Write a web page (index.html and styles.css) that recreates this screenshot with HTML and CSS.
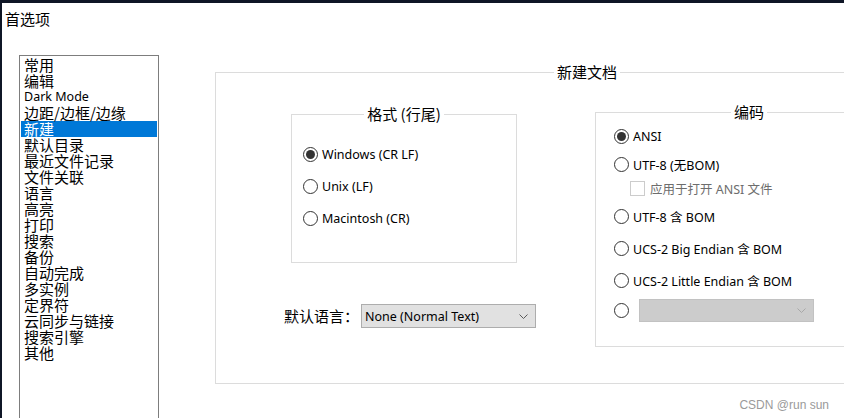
FILE: index.html
```html
<!DOCTYPE html>
<html lang="zh">
<head>
<meta charset="utf-8">
<title>首选项</title>
<link rel="stylesheet" href="styles.css">
</head>
<body>
<div class="window">
  <div class="title">首选项</div>
  <div class="main">
    <ul class="cat-list">
      <li>常用</li>
      <li>编辑</li>
      <li class="latin">Dark Mode</li>
      <li>边距/边框/边缘</li>
      <li class="selected">新建</li>
      <li>默认目录</li>
      <li>最近文件记录</li>
      <li>文件关联</li>
      <li>语言</li>
      <li>高亮</li>
      <li>打印</li>
      <li>搜索</li>
      <li>备份</li>
      <li>自动完成</li>
      <li>多实例</li>
      <li>定界符</li>
      <li>云同步与链接</li>
      <li>搜索引擎</li>
      <li>其他</li>
    </ul>
    <fieldset class="group outer">
      <legend>新建文档</legend>
      <div class="outer-body">
        <div class="left-col">
          <fieldset class="group format">
            <legend>格式 (行尾)</legend>
            <div class="format-list">
              <div class="opt"><span class="radio checked"></span>Windows (CR LF)</div>
              <div class="opt"><span class="radio"></span>Unix (LF)</div>
              <div class="opt"><span class="radio"></span>Macintosh (CR)</div>
            </div>
          </fieldset>
          <div class="lang-row">
            <span class="lang-label">默认语言：</span>
            <div class="select">
              <span>None (Normal Text)</span>
              <svg class="chev" width="9" height="5" viewBox="0 0 9 5"><polyline points="0.5,0.5 4.5,4.5 8.5,0.5" fill="none" stroke="#5a5a5a" stroke-width="1"/></svg>
            </div>
          </div>
        </div>
        <fieldset class="group encoding">
          <legend>编码</legend>
          <div class="enc-list">
            <div class="opt"><span class="radio checked"></span>ANSI</div>
            <div class="opt mt12"><span class="radio"></span>UTF-8 (无BOM)</div>
            <div class="opt check-row mt8"><span class="checkbox"></span>应用于打开 ANSI 文件</div>
            <div class="opt mt12"><span class="radio"></span>UTF-8 含 BOM</div>
            <div class="opt mt16"><span class="radio"></span>UCS-2 Big Endian 含 BOM</div>
            <div class="opt mt16"><span class="radio"></span>UCS-2 Little Endian 含 BOM</div>
            <div class="opt last-row"><span class="radio"></span>
              <div class="select disabled">
                <span></span>
                <svg class="chev" width="9" height="5" viewBox="0 0 9 5"><polyline points="0.5,0.5 4.5,4.5 8.5,0.5" fill="none" stroke="#a8a8a8" stroke-width="1"/></svg>
              </div>
            </div>
          </div>
        </fieldset>
      </div>
    </fieldset>
  </div>
  <div class="watermark">CSDN @run sun</div>
</div>
</body>
</html>
```
FILE: styles.css
```css
html, body {
  margin: 0;
  padding: 0;
  height: 100%;
  overflow: hidden;
  background: #ffffff;
}
body {
  font-family: "Noto Sans CJK SC", "Noto Sans", sans-serif;
  color: #000;
}
.window {
  position: relative;
  height: 418px;
  box-sizing: border-box;
  border-top: 3px solid #0f1626;
  border-left: 2px solid #0f1626;
  overflow: hidden;
}
.title {
  font-size: 15px;
  line-height: 16px;
  height: 16px;
  padding: 8px 0 0 3px;
}
.main {
  display: flex;
  align-items: flex-start;
  margin-top: 28px;
  padding-left: 17px;
}
.cat-list {
  flex: none;
  list-style: none;
  margin: 0;
  padding: 1px;
  width: 140px;
  height: 420px;
  box-sizing: border-box;
  border: 1px solid #7d7d7d;
}
.cat-list li {
  font-size: 15px;
  line-height: 16px;
  height: 16px;
  padding-left: 3px;
  white-space: nowrap;
}
.cat-list li.latin {
  font-family: "Noto Sans", sans-serif;
  font-size: 12.5px;
}
.cat-list li.selected {
  background: #0078d7;
  color: #fff;
}
.group {
  margin: 0;
  padding: 0;
  border: 1px solid #dcdcdc;
  min-width: 0;
  box-sizing: border-box;
}
.group > legend {
  margin: 0 auto;
  padding: 0 3px;
  font-size: 15px;
  line-height: 16px;
  white-space: nowrap;
}
.outer {
  flex: none;
  width: 744px;
  margin-left: 56px;
  margin-top: 9px;
}
.outer-body {
  display: flex;
  align-items: flex-start;
  padding: 24px 0 36px 75px;
}
.left-col {
  flex: none;
  width: 226px;
  display: flex;
  flex-direction: column;
}
.format {
  width: 226px;
  margin-top: 2px;
}
.format-list {
  display: flex;
  flex-direction: column;
  gap: 16px;
  padding: 24px 0 36px 11px;
}
.opt {
  display: flex;
  align-items: center;
  height: 16px;
  font-family: "Noto Sans", "Noto Sans CJK SC", sans-serif;
  font-size: 12.5px;
  white-space: nowrap;
}
.radio {
  flex: none;
  display: inline-flex;
  align-items: center;
  justify-content: center;
  width: 15px;
  height: 15px;
  box-sizing: border-box;
  border: 1px solid #333;
  border-radius: 50%;
  margin-right: 4px;
  background: #fff;
}
.radio.checked::after {
  content: "";
  width: 9px;
  height: 9px;
  border-radius: 50%;
  background: #333;
}
.lang-row {
  display: flex;
  align-items: center;
  margin-top: 41px;
  margin-left: -7px;
  height: 24px;
}
.lang-label {
  flex: none;
  font-size: 15px;
  line-height: 16px;
  margin-right: 2px;
}
.select {
  flex: none;
  display: flex;
  align-items: center;
  justify-content: space-between;
  width: 175px;
  height: 24px;
  box-sizing: border-box;
  border: 1px solid #adadad;
  background: #e1e1e1;
  padding: 0 7px 0 3px;
  font-family: "Noto Sans", sans-serif;
  font-size: 12.5px;
}
.select.disabled {
  height: 23px;
  margin-left: 6px;
  background: #cccccc;
  border-color: #c2c2c2;
}
.encoding {
  flex: none;
  width: 308px;
  margin-left: 78px;
}
.enc-list {
  display: flex;
  flex-direction: column;
  padding: 8px 0 24px 18px;
}
.mt8 { margin-top: 8px; }
.mt12 { margin-top: 12px; }
.mt16 { margin-top: 16px; }
.check-row {
  padding-left: 16px;
  color: #6d6d6d;
}
.checkbox {
  flex: none;
  width: 15px;
  height: 15px;
  box-sizing: border-box;
  border: 1px solid #cccccc;
  background: #fff;
  margin-right: 5px;
}
.last-row {
  height: 24px;
  margin-top: 10px;
}
.watermark {
  position: absolute;
  right: 15px;
  bottom: 6px;
  font-family: "Liberation Sans", Arial, sans-serif;
  font-size: 12px;
  color: #9a9a9a;
}
```
